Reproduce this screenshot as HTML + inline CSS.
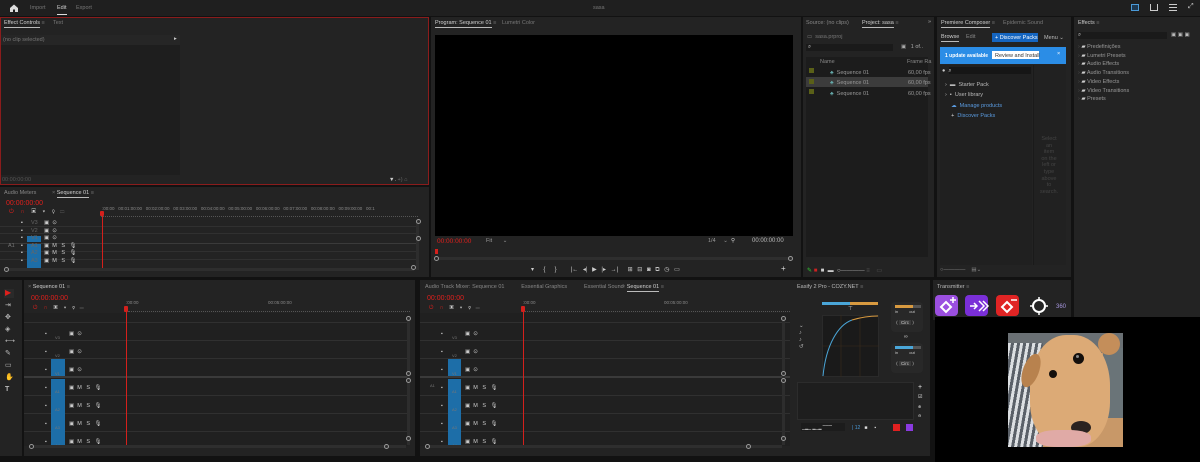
<!DOCTYPE html>
<html><head><meta charset="utf-8"><style>
*{box-sizing:border-box;margin:0;padding:0}
body{width:1200px;height:462px;background:#121212;position:relative;overflow:hidden;font-family:"Liberation Sans",sans-serif;font-size:5px;color:#9a9a9a}
.a{position:absolute}
.p{position:absolute;background:#232323}
.t{position:absolute;font-size:5.5px;color:#a0a0a0;white-space:nowrap}
.w{color:#d0d0d0}
.u{border-bottom:1px solid #bbb;padding-bottom:1px}
.red{color:#e0201c}
.blue{background:#1d6ea8}
.ln{position:absolute;height:1px;background:#303030}
.ph{position:absolute;width:1px;background:#d4201c}
.knob{position:absolute;width:5px;height:5px;border:1px solid #999;border-radius:50%}
</style></head><body>
<div class="a" style="left:0;top:0;width:1200px;height:16px;background:#1f1f1f"></div>
<svg class="a" style="left:9px;top:4px" width="10" height="8"><path d="M1 4L5 0.5L9 4V8H6V5.5H4V8H1Z" fill="#ddd"/></svg>
<div class="t" style="left:30px;top:5px;color:#777">Import</div>
<div class="t w" style="left:57px;top:5px">Edit</div>
<div class="a" style="left:57px;top:14px;width:10px;height:1px;background:#ddd"></div>
<div class="t" style="left:76px;top:5px;color:#777">Export</div>
<div class="t" style="left:593px;top:5px;color:#777">sasa</div>
<div class="a" style="left:1131px;top:4px;width:8px;height:7px;border:1px solid #4a9ad8;background:#1d3850"></div>
<div class="a" style="left:1150px;top:4px;width:8px;height:7px;border:1px solid #ccc;border-top:none"></div>
<div class="a" style="left:1169px;top:4px;width:8px;height:7px;border-top:1px solid #ccc;border-bottom:1px solid #ccc"></div>
<div class="a" style="left:1169px;top:7px;width:8px;height:1px;background:#ccc"></div>
<div class="t" style="left:1188px;top:3px;color:#ccc;font-size:7px">⤢</div>

<div class="p" style="left:0;top:17px;width:429px;height:168px;border:1px solid #8a1c1c"></div>
<div class="t w" style="left:4px;top:20px"><span class="u">Effect Controls</span> <span style="color:#777">≡</span></div>
<div class="t" style="left:53px;top:20px;color:#777">Text</div>
<div class="a" style="left:1px;top:35px;width:179px;height:140px;background:#1e1e1e"></div>
<div class="a" style="left:1px;top:35px;width:179px;height:10px;background:#262626"></div>
<div class="t" style="left:3px;top:37px;color:#777">(no clip selected)</div>
<div class="t" style="left:174px;top:36px;color:#ccc">▸</div>
<div class="t" style="left:2px;top:177px;color:#555">00:00:00:00</div>
<div class="t" style="left:389px;top:177px;color:#ccc">▼. <span style="color:#666">+) ⌂</span></div>

<div class="p" style="left:0;top:187px;width:429px;height:90px"></div>
<div class="t" style="left:4px;top:190px;color:#888">Audio Meters</div>
<div class="t w" style="left:52px;top:190px"><span style="color:#777">×</span> <span class="u">Sequence 01</span> <span style="color:#777">≡</span></div>
<div class="t red" style="left:6px;top:200px;font-size:7px">00:00:00:00</div>
<div class="t red" style="left:9px;top:209px;font-size:6px">⏻ &nbsp;&nbsp;&nbsp;∩ <span style="color:#ccc">&nbsp;&nbsp; ▣ &nbsp;&nbsp; ▾ &nbsp;&nbsp; ⚲ &nbsp;&nbsp;</span><span style="color:#555">▭</span></div>
<div class="t" style="left:102px;top:206px;font-size:4.5px;color:#888">:00:00 &nbsp;&nbsp;00:01:00:00 &nbsp;&nbsp;00:02:00:00 &nbsp;&nbsp;00:03:00:00 &nbsp;&nbsp;00:04:00:00 &nbsp;&nbsp;00:05:00:00 &nbsp;&nbsp;00:06:00:00 &nbsp;&nbsp;00:07:00:00 &nbsp;&nbsp;00:08:00:00 &nbsp;&nbsp;00:09:00:00 &nbsp;&nbsp;00:1</div>
<div class="a" style="left:101px;top:212px;width:317px;height:5px;border-bottom:1px dotted #555"></div>
<div class="ln" style="left:0;top:226px;width:418px"></div><div class="ln" style="left:0;top:233px;width:418px"></div><div class="ln" style="left:0;top:243px;width:418px;background:#3a3a3a"></div><div class="ln" style="left:0;top:251px;width:418px"></div><div class="ln" style="left:0;top:259px;width:418px"></div>
<div class="a blue" style="left:27px;top:236px;width:14px;height:6px"></div>
<div class="a blue" style="left:27px;top:244px;width:14px;height:24px"></div>
<div class="t" style="left:21px;top:220px;line-height:7.6px;color:#ccc">▪<br>▪<br>▪<br>▪<br>▪<br>▪</div>
<div class="t" style="left:31px;top:220px;line-height:7.6px;color:#666">V3<br>V2<br>V1<br>A1<br>A2<br>A3</div>
<div class="t" style="left:8px;top:243px;color:#777">A1</div>
<div class="t" style="left:44px;top:220px;line-height:7.6px;color:#ccc">▣ &nbsp;⊙<br>▣ &nbsp;⊙<br>▣ &nbsp;⊙<br>▣ &nbsp;M &nbsp;&nbsp;S &nbsp;&nbsp;🎙<br>▣ &nbsp;M &nbsp;&nbsp;S &nbsp;&nbsp;🎙<br>▣ &nbsp;M &nbsp;&nbsp;S &nbsp;&nbsp;🎙</div>
<div class="ph" style="left:102px;top:212px;height:56px"></div>
<div class="a" style="left:100px;top:211px;width:4px;height:5px;background:#d4201c;border-radius:1px"></div>
<div class="a" style="left:416px;top:220px;width:3px;height:50px;background:#2d2d2d"></div>
<div class="a" style="left:6px;top:268px;width:408px;height:3px;background:#2e2e2e"></div>
<div class="knob" style="left:4px;top:267px"></div><div class="knob" style="left:411px;top:265px"></div><div class="knob" style="left:416px;top:219px"></div><div class="knob" style="left:416px;top:236px"></div>

<div class="p" style="left:431px;top:17px;width:370px;height:260px"></div>
<div class="t w" style="left:435px;top:20px"><span class="u">Program: Sequence 01</span> <span style="color:#777">≡</span></div>
<div class="t" style="left:502px;top:20px;color:#777">Lumetri Color</div>
<div class="a" style="left:435px;top:35px;width:358px;height:201px;background:#000"></div>
<div class="t red" style="left:437px;top:238px;font-size:6.5px">00:00:00:00</div>
<div class="t" style="left:486px;top:238px;color:#999">Fit &nbsp;&nbsp;&nbsp;&nbsp;&nbsp; ⌄</div>
<div class="t" style="left:708px;top:238px;color:#999">1/4 &nbsp;&nbsp;&nbsp; ⌄ &nbsp;<span style="color:#ccc">⚲</span></div>
<div class="t" style="left:752px;top:238px;color:#bbb;font-size:6px">00:00:00:00</div>
<div class="a" style="left:435px;top:249px;width:3px;height:5px;background:#d4201c"></div>
<div class="a" style="left:438px;top:257px;width:355px;height:3px;background:#2e2e2e"></div>
<div class="knob" style="left:434px;top:256px"></div><div class="knob" style="left:788px;top:256px"></div>
<div class="t" style="left:531px;top:266px;color:#ccc;font-size:6px;word-spacing:3px">▾ &nbsp;{ &nbsp;} &nbsp;&nbsp;|← ◂| ▶ |▸ →| &nbsp;⊞ ⊟ ◙ ⧉ ◷ ▭</div>
<div class="t" style="left:781px;top:264px;color:#ddd;font-size:8px">+</div>

<div class="p" style="left:803px;top:17px;width:131px;height:260px"></div>
<div class="t" style="left:806px;top:20px;color:#888">Source: (no clips)</div>
<div class="t w" style="left:862px;top:20px"><span class="u">Project: sasa</span> <span style="color:#777">≡</span></div>
<div class="t" style="left:928px;top:19px;color:#aaa">»</div>
<div class="t" style="left:807px;top:34px;color:#777">▭ &nbsp;sasa.prproj</div>
<div class="a" style="left:806px;top:44px;width:87px;height:7px;background:#1a1a1a"></div>
<div class="t" style="left:808px;top:44px;color:#ccc">⌕</div>
<div class="t" style="left:901px;top:44px;color:#aaa">▣ &nbsp;&nbsp;1 of..</div>
<div class="a" style="left:806px;top:57px;width:122px;height:200px;background:#1c1c1c"></div>
<div class="t" style="left:820px;top:59px;color:#888">Name</div><div class="t" style="left:907px;top:59px;color:#888">Frame Ra</div>
<div class="a" style="left:806px;top:77px;width:122px;height:10px;background:#3c3c3c"></div>
<div class="a" style="left:809px;top:68px;width:5px;height:5px;background:#5a6018"></div>
<div class="a" style="left:809px;top:79px;width:5px;height:5px;background:#5a6018"></div>
<div class="a" style="left:809px;top:89px;width:5px;height:5px;background:#5a6018"></div>
<div class="t" style="left:830px;top:68px;line-height:10.4px;color:#999"><span style="color:#6aa">♣</span> &nbsp;Sequence 01<br><span style="color:#6aa">♣</span> &nbsp;Sequence 01<br><span style="color:#6aa">♣</span> &nbsp;Sequence 01</div>
<div class="t" style="left:908px;top:68px;line-height:10.4px;color:#999">60,00 fps<br>60,00 fps<br>60,00 fps</div>
<div class="t" style="left:807px;top:267px;font-size:6px"><span style="color:#3c3">✎</span> <span style="color:#c22">■</span> &nbsp;<span style="color:#ccc">■ &nbsp;▬ &nbsp;○</span>———— <span style="color:#555">≡ &nbsp;&nbsp;&nbsp;▭</span></div>

<div class="p" style="left:937px;top:17px;width:134px;height:260px"></div>
<div class="t w" style="left:941px;top:20px"><span class="u">Premiere Composer</span> <span style="color:#777">≡</span></div>
<div class="t" style="left:1003px;top:20px;color:#777">Epidemic Sound</div>
<div class="t w" style="left:941px;top:34px"><span class="u">Browse</span></div>
<div class="t" style="left:966px;top:34px;color:#888">Edit</div>
<div class="a" style="left:992px;top:33px;width:46px;height:9px;background:#1565c0"></div>
<div class="t" style="left:995px;top:35px;color:#fff">+ Discover Packs</div>
<div class="t" style="left:1044px;top:35px;color:#bbb">Menu ⌄</div>
<div class="a" style="left:940px;top:47px;width:126px;height:17px;background:#2b8de6"></div>
<div class="t" style="left:945px;top:53px;color:#fff;font-weight:bold;font-size:5px">1 update available</div>
<div class="a" style="left:992px;top:51px;width:47px;height:8px;background:#fff"></div>
<div class="t" style="left:995px;top:53px;color:#333">Review and Install</div>
<div class="t" style="left:1057px;top:51px;color:#fff">×</div>
<div class="a" style="left:940px;top:65px;width:92px;height:200px;background:#202020"></div>
<div class="a" style="left:949px;top:67px;width:82px;height:7px;background:#161616"></div>
<div class="t" style="left:942px;top:68px;color:#ccc">● &nbsp;⌕</div>
<div class="t" style="left:945px;top:80px;line-height:10.4px;color:#bbb">› &nbsp;▬ &nbsp;Starter Pack<br>› &nbsp;▪ &nbsp;User library<br>&nbsp;&nbsp;&nbsp; <span style="color:#5a9be0">☁ &nbsp;Manage products</span><br>&nbsp;&nbsp;&nbsp; <span style="color:#5a9be0"><span style="color:#ddd">+</span> &nbsp;Discover Packs</span></div>
<div class="a" style="left:1033px;top:65px;width:33px;height:200px;background:#212121;border-left:1px solid #1a1a1a"></div>
<div class="t" style="left:1040px;top:136px;color:#444;text-align:center;line-height:6.6px;white-space:normal;width:18px">Select an item on the left or type above to search.</div>
<div class="t" style="left:940px;top:267px;color:#888">○———— &nbsp;&nbsp;&nbsp;▤⌄</div>

<div class="p" style="left:1074px;top:17px;width:126px;height:300px"></div>
<div class="t" style="left:1078px;top:20px;color:#ccc">Effects <span style="color:#777">≡</span></div>
<div class="a" style="left:1077px;top:32px;width:90px;height:7px;background:#1a1a1a"></div>
<div class="t" style="left:1078px;top:32px;color:#ccc">⌕</div>
<div class="t" style="left:1171px;top:32px;color:#bbb">▣ ▣ ▣</div>
<div class="t" style="left:1078px;top:43px;line-height:8.7px;color:#999"><span style="color:#555">›</span> <span style="color:#ccc">▰</span> Predefinições<br><span style="color:#555">›</span> <span style="color:#ccc">▰</span> Lumetri Presets<br><span style="color:#555">›</span> <span style="color:#ccc">▰</span> Audio Effects<br><span style="color:#555">›</span> <span style="color:#ccc">▰</span> Audio Transitions<br><span style="color:#555">›</span> <span style="color:#ccc">▰</span> Video Effects<br><span style="color:#555">›</span> <span style="color:#ccc">▰</span> Video Transitions<br><span style="color:#555">›</span> <span style="color:#ccc">▰</span> Presets</div>

<div class="p" style="left:0;top:280px;width:22px;height:176px"></div>
<div class="a" style="left:4px;top:289px;width:10px;height:9px;background:#2a2a2a"></div>
<div class="t" style="left:5px;top:288px;color:#e0201c;font-size:8px">▶</div>
<div class="t" style="left:5px;top:300px;color:#bbb;font-size:7px;line-height:12px">⇥<br>✥<br>◈<br>⟷<br>✎<br>▭<br>✋<br><b>T</b></div>

<div class="p" style="left:24px;top:280px;width:391px;height:176px"></div>
<div class="t w" style="left:28px;top:284px"><span style="color:#777">×</span> Sequence 01 <span style="color:#777">≡</span></div>
<div class="t red" style="left:31px;top:295px;font-size:7px">00:00:00:00</div>
<div class="t red" style="left:33px;top:305px;font-size:5.5px">⏻ &nbsp;&nbsp;&nbsp;∩ <span style="color:#ccc">&nbsp;&nbsp; ▣ &nbsp;&nbsp; ▾ &nbsp;&nbsp; ⚲ &nbsp;&nbsp;</span><span style="color:#555">▭</span></div>
<div class="t" style="left:126px;top:300px;font-size:4.5px;color:#888">:00:00</div>
<div class="t" style="left:268px;top:300px;font-size:4.5px;color:#888">00:05:00:00</div>
<div class="a" style="left:128px;top:307px;width:282px;height:5px;border-bottom:1px dotted #555"></div>
<div class="a" style="left:24px;top:313px;width:384px;height:133px;background:#202020"></div>
<div class="ln" style="left:24px;top:322px;width:384px"></div><div class="ln" style="left:24px;top:340px;width:384px"></div><div class="ln" style="left:24px;top:358px;width:384px"></div><div class="a" style="left:24px;top:376px;width:384px;height:2px;background:#3a3a3a"></div><div class="ln" style="left:24px;top:395px;width:384px"></div><div class="ln" style="left:24px;top:413px;width:384px"></div><div class="ln" style="left:24px;top:431px;width:384px"></div>
<div class="a blue" style="left:51px;top:359px;width:14px;height:17px"></div>
<div class="a blue" style="left:51px;top:379px;width:14px;height:67px"></div>
<div class="t" style="left:45px;top:325px;line-height:18px;color:#ccc;font-size:5px">▪<br>▪<br>▪<br>▪<br>▪<br>▪<br>▪</div>
<div class="t" style="left:55px;top:329px;line-height:18px;color:#777;font-size:4px">V3<br>V2<br>V1<br>A1<br>A2<br>A3<br>A4</div>
<div class="t" style="left:69px;top:325px;line-height:18px;color:#ccc;font-size:5.5px">▣ &nbsp;⊙<br>▣ &nbsp;⊙<br>▣ &nbsp;⊙<br>▣ &nbsp;M &nbsp;&nbsp;S &nbsp;&nbsp;🎙<br>▣ &nbsp;M &nbsp;&nbsp;S &nbsp;&nbsp;🎙<br>▣ &nbsp;M &nbsp;&nbsp;S &nbsp;&nbsp;🎙<br>▣ &nbsp;M &nbsp;&nbsp;S &nbsp;&nbsp;🎙</div>
<div class="ph" style="left:126px;top:308px;height:138px"></div>
<div class="a" style="left:124px;top:306px;width:4px;height:6px;background:#d4201c;border-radius:1px"></div>
<div class="a" style="left:407px;top:318px;width:3px;height:127px;background:#2d2d2d"></div>
<div class="a" style="left:33px;top:445px;width:373px;height:3px;background:#2e2e2e"></div>
<div class="knob" style="left:29px;top:444px"></div><div class="knob" style="left:384px;top:444px"></div><div class="knob" style="left:406px;top:316px"></div><div class="knob" style="left:406px;top:371px"></div><div class="knob" style="left:406px;top:378px"></div><div class="knob" style="left:406px;top:436px"></div>

<div class="p" style="left:420px;top:280px;width:377px;height:176px"></div>
<div class="t" style="left:425px;top:284px;color:#888">Audio Track Mixer: Sequence 01 &nbsp;&nbsp;&nbsp;&nbsp;&nbsp;&nbsp;&nbsp;&nbsp;&nbsp; Essential Graphics &nbsp;&nbsp;&nbsp;&nbsp;&nbsp;&nbsp;&nbsp;&nbsp;&nbsp; Essential Sound</div>
<div class="t w" style="left:622px;top:284px"><span style="color:#777">×</span> <span class="u">Sequence 01</span> <span style="color:#777">≡</span></div>
<div class="t red" style="left:427px;top:295px;font-size:7px">00:00:00:00</div>
<div class="t red" style="left:429px;top:305px;font-size:5.5px">⏻ &nbsp;&nbsp;&nbsp;∩ <span style="color:#ccc">&nbsp;&nbsp; ▣ &nbsp;&nbsp; ▾ &nbsp;&nbsp; ⚲ &nbsp;&nbsp;</span><span style="color:#555">▭</span></div>
<div class="t" style="left:523px;top:300px;font-size:4.5px;color:#888">:00:00</div>
<div class="t" style="left:664px;top:300px;font-size:4.5px;color:#888">00:05:00:00</div>
<div class="a" style="left:525px;top:307px;width:265px;height:5px;border-bottom:1px dotted #555"></div>
<div class="a" style="left:420px;top:313px;width:370px;height:133px;background:#202020"></div>
<div class="ln" style="left:420px;top:322px;width:370px"></div><div class="ln" style="left:420px;top:340px;width:370px"></div><div class="ln" style="left:420px;top:358px;width:370px"></div><div class="a" style="left:420px;top:376px;width:370px;height:2px;background:#3a3a3a"></div><div class="ln" style="left:420px;top:395px;width:370px"></div><div class="ln" style="left:420px;top:413px;width:370px"></div><div class="ln" style="left:420px;top:431px;width:370px"></div>
<div class="a blue" style="left:448px;top:359px;width:13px;height:17px"></div>
<div class="a blue" style="left:448px;top:379px;width:13px;height:67px"></div>
<div class="t" style="left:430px;top:383px;color:#777;font-size:4px">A1</div>
<div class="t" style="left:441px;top:325px;line-height:18px;color:#ccc;font-size:5px">▪<br>▪<br>▪<br>▪<br>▪<br>▪<br>▪</div>
<div class="t" style="left:452px;top:329px;line-height:18px;color:#777;font-size:4px">V3<br>V2<br>V1<br>A1<br>A2<br>A3<br>A4</div>
<div class="t" style="left:465px;top:325px;line-height:18px;color:#ccc;font-size:5.5px">▣ &nbsp;⊙<br>▣ &nbsp;⊙<br>▣ &nbsp;⊙<br>▣ &nbsp;M &nbsp;&nbsp;S &nbsp;&nbsp;🎙<br>▣ &nbsp;M &nbsp;&nbsp;S &nbsp;&nbsp;🎙<br>▣ &nbsp;M &nbsp;&nbsp;S &nbsp;&nbsp;🎙<br>▣ &nbsp;M &nbsp;&nbsp;S &nbsp;&nbsp;🎙</div>
<div class="ph" style="left:523px;top:308px;height:138px"></div>
<div class="a" style="left:521px;top:306px;width:4px;height:6px;background:#d4201c;border-radius:1px"></div>
<div class="a" style="left:782px;top:318px;width:3px;height:127px;background:#2d2d2d"></div>
<div class="a" style="left:428px;top:445px;width:354px;height:3px;background:#2e2e2e"></div>
<div class="knob" style="left:425px;top:444px"></div><div class="knob" style="left:746px;top:444px"></div><div class="knob" style="left:781px;top:316px"></div><div class="knob" style="left:781px;top:371px"></div><div class="knob" style="left:781px;top:378px"></div><div class="knob" style="left:781px;top:436px"></div>

<div class="p" style="left:795px;top:280px;width:135px;height:176px"></div>
<div class="t" style="left:797px;top:284px;color:#bbb">Easify 2 Pro - COZY.NET <span style="color:#777">≡</span></div>
<div class="a" style="left:822px;top:302px;width:28px;height:3px;background:#4aa6d8"></div>
<div class="a" style="left:850px;top:302px;width:28px;height:3px;background:#d89a40"></div>
<div class="t" style="left:848px;top:306px;color:#ccc">⊤</div>
<div class="a" style="left:822px;top:315px;width:57px;height:62px;background:#1a1a1a;border:1px solid #2a2a2a"></div>
<svg class="a" style="left:822px;top:315px" width="57" height="62"><path d="M19 0V62M38 0V62M0 31H57" stroke="#3a2c1c" stroke-width="0.6"/><path d="M1 61C4 30 16 10 30 5" stroke="#4aa6d8" fill="none" stroke-width="1"/><path d="M30 5C40 2 50 1 56 1" stroke="#d89a40" fill="none" stroke-width="1"/></svg>
<div class="t" style="left:799px;top:323px;color:#bbb;line-height:7px">⌄<br>♪<br>♪<br>↺</div>
<div class="a" style="left:891px;top:302px;width:32px;height:30px;background:#282828;border-radius:4px"></div>
<div class="a" style="left:895px;top:305px;width:18px;height:3px;background:#d89a40"></div><div class="a" style="left:913px;top:305px;width:8px;height:3px;background:#555"></div>
<div class="t" style="left:895px;top:309px;color:#ccc;font-size:4px">in &nbsp;&nbsp;&nbsp;&nbsp;&nbsp;&nbsp;&nbsp;&nbsp; out</div>
<div class="t" style="left:896px;top:320px;color:#ccc;font-size:4.5px">⟨ <span style="background:#3a3a3a;padding:0 2px">Circ</span> ⟩</div>
<div class="t" style="left:904px;top:334px;color:#ccc">∞</div>
<div class="a" style="left:891px;top:343px;width:32px;height:30px;background:#282828;border-radius:4px"></div>
<div class="a" style="left:895px;top:346px;width:18px;height:3px;background:#4aa6d8"></div><div class="a" style="left:913px;top:346px;width:8px;height:3px;background:#555"></div>
<div class="t" style="left:895px;top:350px;color:#ccc;font-size:4px">in &nbsp;&nbsp;&nbsp;&nbsp;&nbsp;&nbsp;&nbsp;&nbsp; out</div>
<div class="t" style="left:896px;top:361px;color:#ccc;font-size:4.5px">⟨ <span style="background:#3a3a3a;padding:0 2px">Circ</span> ⟩</div>
<div class="a" style="left:797px;top:382px;width:117px;height:38px;background:#1e1e1e;border:1px solid #2c2c2c"></div>
<div class="t" style="left:918px;top:383px;color:#eee;font-size:7px;line-height:9px">+<br><span style="font-size:5px">☑</span><br><span style="font-size:4px">⊕<br>⊖</span></div>
<div class="a" style="left:801px;top:423px;width:44px;height:8px;background:#1c1c1c"></div>
<div class="t" style="left:802px;top:425px;color:#aaa;font-size:4px">▁▂▁ ▂▁▂ ▔▔▔</div>
<div class="t" style="left:852px;top:425px;color:#4a9ad8;font-size:5px">| 12 &nbsp;&nbsp;<span style="color:#ddd">■ &nbsp;&nbsp;&nbsp; ▪</span></div>
<div class="a" style="left:893px;top:424px;width:7px;height:7px;background:#e02020"></div>
<div class="a" style="left:906px;top:424px;width:7px;height:7px;background:#8a3ae0"></div>

<div class="p" style="left:933px;top:280px;width:138px;height:40px"></div>
<div class="t" style="left:937px;top:284px;color:#bbb">Transmitter <span style="color:#777">≡</span></div>
<div class="a" style="left:935px;top:295px;width:23px;height:21px;border-radius:4px;background:#9b4fe0"></div>
<div class="a" style="left:965px;top:295px;width:23px;height:21px;border-radius:4px;background:#7a2fd8"></div>
<div class="a" style="left:996px;top:295px;width:23px;height:21px;border-radius:4px;background:#e02424"></div>
<svg class="a" style="left:935px;top:295px" width="120" height="21"><path d="M6 12L11 7L16 12L11 17Z" stroke="#fff" stroke-width="2" fill="none"/><path d="M15 5H21M18 2V8" stroke="#fff" stroke-width="1.5"/><path d="M35 11H42M39 8L42 11L39 14M44 6L49 11L44 16M48 6L53 11L48 16" stroke="#fff" stroke-width="1.5" fill="none"/><path d="M67 12L72 7L77 12L72 17Z" stroke="#fff" stroke-width="2" fill="none"/><path d="M76 5H82" stroke="#fff" stroke-width="1.5"/><circle cx="104" cy="11" r="6" stroke="#fff" stroke-width="2" fill="none"/><path d="M104 2V5M104 17V20M95 11H98M110 11H113" stroke="#fff" stroke-width="1.5"/></svg>
<div class="t" style="left:1056px;top:304px;color:#a898e0;font-size:6px">360</div>
<div class="a" style="left:935px;top:317px;width:265px;height:145px;background:#000"></div>
<div class="a" style="left:1008px;top:333px;width:115px;height:114px;background:#c89868;overflow:hidden">
  <div class="a" style="left:0;top:0;width:115px;height:20px;background:#6a7074"></div>
  <div class="a" style="left:0;top:10px;width:35px;height:104px;background:repeating-linear-gradient(100deg,#dcdfe2 0 3px,#5a6068 3px 6px)"></div>
  <div class="a" style="left:95px;top:15px;width:20px;height:70px;background:#6a7478"></div>
  <div class="a" style="left:22px;top:2px;width:80px;height:112px;border-radius:45% 45% 40% 40%;background:#dcaa76"></div>
  <div class="a" style="left:15px;top:20px;width:16px;height:35px;border-radius:50%;background:#b8824e;transform:rotate(20deg)"></div>
  <div class="a" style="left:90px;top:0;width:22px;height:22px;border-radius:50%;background:#c48e5a"></div>
  <div class="a" style="left:65px;top:20px;width:11px;height:11px;border-radius:50%;background:#140f0c"></div>
  <div class="a" style="left:68px;top:22px;width:3px;height:3px;border-radius:50%;background:#888"></div>
  <div class="a" style="left:41px;top:37px;width:8px;height:8px;border-radius:50%;background:#140f0c"></div>
  <div class="a" style="left:63px;top:88px;width:20px;height:13px;border-radius:50%;background:#2a2220"></div>
  <div class="a" style="left:28px;top:97px;width:55px;height:17px;border-radius:40%;background:#e0aaa6"></div>
</div>
</body></html>
